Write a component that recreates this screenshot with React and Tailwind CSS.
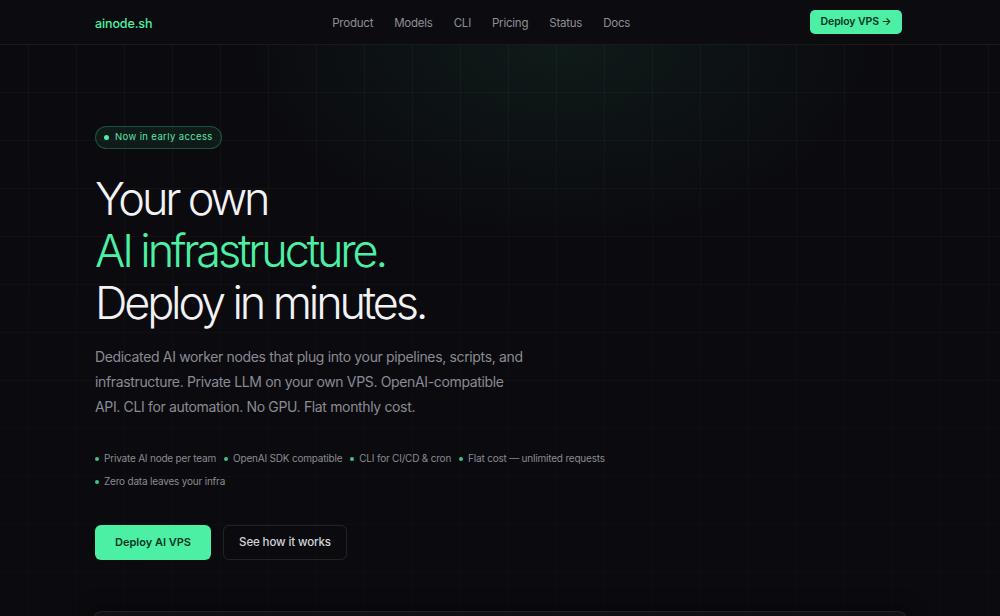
const navLinks = ['Product', 'Models', 'CLI', 'Pricing', 'Status', 'Docs'];

const features = [
  'Private AI node per team',
  'OpenAI SDK compatible',
  'CLI for CI/CD & cron',
  'Flat cost — unlimited requests',
  'Zero data leaves your infra',
];

export default function App() {
  return (
    <div className="min-h-screen bg-[#0b0b0f] text-white font-['Inter',sans-serif] overflow-hidden">
      {/* Top nav */}
      <header className="h-[45px] border-b border-white/[0.06] bg-[#0c0c10]">
        <div className="h-full pl-[95px] pr-[98px] flex items-center justify-between">
          <a href="#" className="pt-[4px] text-[12.5px] font-medium text-[#4cf0a4] tracking-[-0.01em]">ainode.sh</a>
          <nav className="pt-[4px] flex items-center gap-[21px]">
            {navLinks.map((l) => (
              <a key={l} href="#" className="text-[11.5px] tracking-[-0.02em] text-[#8e8e98] hover:text-white transition-colors">{l}</a>
            ))}
          </nav>
          <a href="#" className="h-[24px] w-[92px] flex items-center justify-center rounded-[5px] bg-[#4cf0a4] text-[#06351f] text-[10.5px] font-semibold tracking-[-0.01em]">
            Deploy VPS →
          </a>
        </div>
      </header>

      {/* Hero */}
      <section className="relative bg-[linear-gradient(to_right,rgba(255,255,255,0.028)_1px,transparent_1px),linear-gradient(to_bottom,rgba(255,255,255,0.028)_1px,transparent_1px)] bg-[size:48px_48px] bg-[position:28px_-1px]">
        <div className="pointer-events-none absolute inset-0 bg-[radial-gradient(ellipse_420px_260px_at_56%_0%,rgba(60,220,150,0.075),transparent_75%)]" />
        <div className="pointer-events-none absolute inset-0 bg-[linear-gradient(to_bottom,transparent_0%,rgba(11,11,15,0.5)_55%,rgba(11,11,15,0.7)_100%)]" />

        <div className="relative pl-[95px] pr-[98px] pt-[77px]">
          <div className="inline-flex items-center gap-[6px] h-[23px] px-[8px] rounded-full border border-[#4cf0a4]/25 bg-[#4cf0a4]/[0.07]">
            <span className="w-[5px] h-[5px] rounded-full bg-[#4cf0a4]" />
            <span className="text-[9.5px] tracking-[0.04em] text-[#5fe3a6]">Now in early access</span>
          </div>

          <h1 className="mt-[24px] text-[45px] leading-[52px] font-light tracking-[-0.07em] text-[#f2f2f4]">
            Your own<br />
            <span className="text-[#4cf0a4]">AI infrastructure.</span><br />
            Deploy in minutes.
          </h1>

          <p className="mt-[15px] max-w-[432px] text-[14px] leading-[25px] text-[#8a8a94] tracking-[-0.025em]">
            Dedicated AI worker nodes that plug into your pipelines, scripts, and infrastructure. Private LLM on your own VPS. OpenAI-compatible API. CLI for automation. No GPU. Flat monthly cost.
          </p>

          <ul className="mt-[32px] flex flex-wrap max-w-[620px] gap-x-[8px] gap-y-[8px]">
            {features.map((f) => (
              <li key={f} className="flex items-center gap-[5px] h-[15px] text-[10px] tracking-[-0.02em] text-[#8a8a94]">
                <span className="w-[4px] h-[4px] rounded-full bg-[#4cf0a4]/80" />
                {f}
              </li>
            ))}
          </ul>

          <div className="mt-[36px] flex items-center gap-[12px]">
            <a href="#" className="h-[35px] w-[116px] flex items-center justify-center rounded-[6px] bg-[#4cf0a4] text-[#06351f] text-[11px] font-semibold">
              Deploy AI VPS
            </a>
            <a href="#" className="h-[35px] w-[124px] flex items-center justify-center rounded-[6px] border border-white/10 text-[#d4d4d8] text-[11.5px] font-medium tracking-[-0.01em]">
              See how it works
            </a>
          </div>

          <div className="mt-[51px] -ml-[3px] -mr-[6px] h-[220px] rounded-[10px] border border-white/[0.07] bg-[#101015] shadow-[0_0_20px_rgba(0,0,0,0.6)]" />
        </div>
      </section>
    </div>
  );
}
